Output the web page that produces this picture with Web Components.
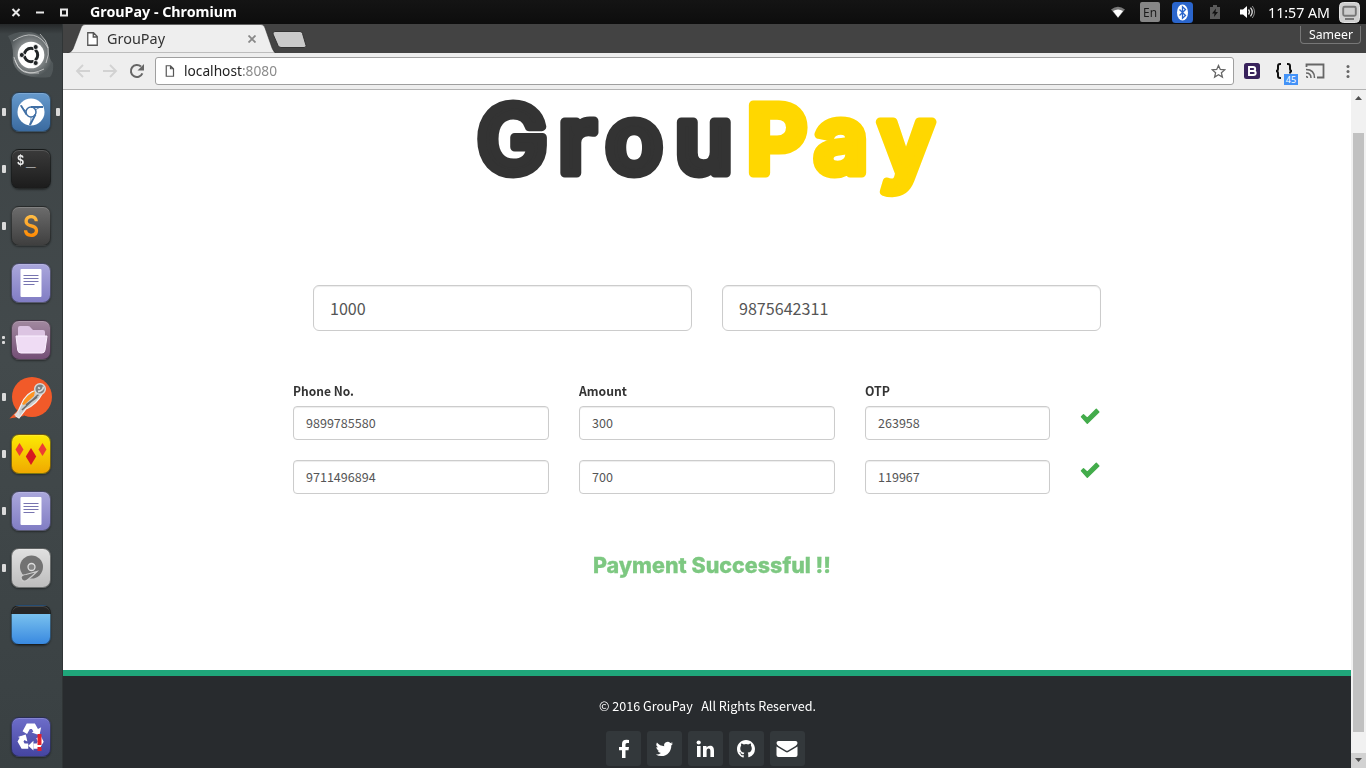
<!DOCTYPE html>
<html lang="en">
<head>
<meta charset="utf-8">
<title>GrouPay</title>
<style>
html,body{margin:0;height:100%;overflow:hidden;background:#fff;font-family:"Noto Sans","Open Sans",sans-serif}
</style>
</head>
<body>
<desktop-shell></desktop-shell>
<script>
const define=(name,html,setup)=>{
  const t=document.createElement('template');t.innerHTML=html;
  customElements.define(name,class extends HTMLElement{
    constructor(){super();this.attachShadow({mode:'open'}).append(t.content.cloneNode(true));}
    connectedCallback(){if(setup)setup(this,this.shadowRoot);}
  });
};

/* Text condensed or widened horizontally to a set width */
define('fit-text',`<style>:host{display:block;white-space:pre;line-height:1.3}span{display:inline-block;transform-origin:0 50%}</style><span><slot></slot></span>`,
(h,r)=>{const w=+h.getAttribute('w');h.style.width=w+'px';const s=r.querySelector('span');
  const n=s.getBoundingClientRect().width;if(n)s.style.transform='scaleX('+(w/n)+')';});

define('system-bar',`<style>
:host{display:flex;height:24px;align-items:center;background:linear-gradient(#141414,#0d0d0d);color:#fff;padding:0 6px 0 9px;box-sizing:border-box;position:relative}
svg{display:block;flex:none}
.title{font-weight:700;font-size:14px;margin-left:19px}
.tray{display:flex;align-items:center;margin-left:auto}
.lang{width:20px;height:20px;margin:0 12px 0 14px;border-radius:2px;background:#868686;color:#1b1b1b;display:flex;align-items:center;justify-content:center;font-size:13px}
.bt{margin-right:16px}.bat{margin-right:19px}.vol{margin-right:13px}
.clock{font-size:14.5px;margin-right:9px}
</style>
<svg width="62" height="24" stroke="#e8e8e8" stroke-width="2" fill="none"><path d="M3.500 9l7 7M10.500 9l-7 7M27 12.500h8"/><path d="M52 9.500h6v6h-6z"/></svg>
<fit-text class="title" w="147">GrouPay - Chromium</fit-text>
<div class="tray">
<svg width="16" height="16" viewBox="0 0 16 16"><path d="M1 5.500Q8 0 15 5.500L8 14z" fill="#777"/><path d="M3 7Q8 4 13 7L8 13.500z" fill="#fff"/></svg>
<div class="lang"><fit-text w="14">En</fit-text></div>
<svg class="bt" width="21" height="21" viewBox="0 0 21 21"><rect width="21" height="21" rx="3.500" fill="#2a65cc"/><ellipse cx="10.500" cy="10.500" rx="5.500" ry="8" fill="#fff"/><path d="M7.500 7.500l6 6-3 2.800V4.700l3 2.800-6 6" stroke="#2a65cc" stroke-width="1.300" fill="none"/></svg>
<svg class="bat" width="12" height="14" viewBox="0 0 12 14"><path d="M4 0h4v2h3v12H1V2h3z" fill="#5a5a5a"/><path d="M7 3.500L3 8.500h2.500L5 12l4-5H6.500z" fill="#111"/></svg>
<svg class="vol" width="15" height="14" viewBox="0 0 15 14"><path d="M0 4.500h3L7 1v12L3 9.500H0z" fill="#fff"/><path d="M8.500 4.500q2 2.500 0 5M10.500 2.700q3.500 4.300 0 8.600" stroke="#ddd" stroke-width="1.300" fill="none"/><path d="M12.300 1q4.500 6 0 12" stroke="#888" fill="none"/></svg>
<fit-text class="clock" w="62">11:57 AM</fit-text>
<svg width="21" height="21" viewBox="0 0 21 21"><rect x=".5" y=".5" width="20" height="20" rx="4" fill="#cfcfcf" stroke="#e2e2e2"/><rect x="4.200" y="4.800" width="12.600" height="9" rx="1.500" fill="#ccc" stroke="#777" stroke-width="1.900"/><path d="M6 17h9" stroke="#777" stroke-width="2"/></svg>
</div>`);

define('launcher-item',`<style>
:host{display:flex;height:57px;padding-top:8px;box-sizing:border-box;align-items:flex-start}
.m{width:11px;height:40px;display:flex;flex-direction:column;align-items:flex-start;justify-content:center;gap:2px}
.m i{display:block;width:4px;height:8px;margin-left:2px;background:#dadada;border-radius:1px}
.tile{width:40px;height:40px;border-radius:8px;background:var(--tile,#888);border:1px solid rgba(20,25,26,.55);box-sizing:border-box;box-shadow:0 1px 2px rgba(0,0,0,.4),inset 0 1px rgba(255,255,255,.16);overflow:hidden}
:host([bare]) .tile{background:none;border-color:transparent;box-shadow:none;overflow:visible}
.r{align-items:flex-end}.r i{margin:0 2px 0 0}
</style><div class="m l"></div><div class="tile"><slot></slot></div><div class="m r"></div>`,
(h,r)=>{const n=+h.getAttribute('windows')||0,l=r.querySelector('.l');
 for(let k=0;k<n;k++){const i=document.createElement('i');if(n>1){i.style.height='3px';i.style.width='3px'}l.append(i)}
 if(h.hasAttribute('active'))r.querySelector('.r').append(document.createElement('i'));});

const doc=`<svg width="38" height="38"><rect x="8.500" y="5" width="21" height="28" rx="1" fill="#fff"/><path d="M11.500 11.500h15M11.500 14.500h15M11.500 17.500h15M11.500 20.500h11" stroke="#7774b0" stroke-width="1.100"/></svg>`;
define('app-launcher',`<style>
:host{display:flex;flex-direction:column;width:63px;box-sizing:border-box;padding-top:3px;background:linear-gradient(#252829,#3d4345 10px,#434a4c 45%,#394042);border-right:1px solid #303536}
svg{display:block}
.dash{height:57px;padding:5px 0 0 8px;box-sizing:border-box}
.trash{margin-top:55px}
.sub{font:600 30px/38px "Inter",sans-serif;color:#ff9d1c;background:linear-gradient(#fb4 25%,#f80 80%);-webkit-background-clip:text;-webkit-text-fill-color:transparent;text-align:center;transform:scaleX(.85)}
.term{color:#eee;font:bold 14px/22px "Liberation Mono",monospace;padding-left:5px;white-space:nowrap;display:flex}
.term span{transform:scaleX(.85);transform-origin:0 0}
.term b{display:block;transform:translate(1px,1px) scaleX(1.15);transform-origin:0 0}
</style>
<div class="dash"><svg width="46" height="46" viewBox="0 0 46 46"><defs><radialGradient id="g"><stop offset=".5" stop-color="#c5c8c9"/><stop offset="1" stop-color="#5c6365"/></radialGradient></defs><path d="M0 4Q14-3 27 1 40 6 41 17 40 26 45 31 46 40 42 45 26 47 14 42 3 35 5 23 5 12 0 4" fill="url(#g)" opacity=".6"/><path d="M5 9Q28-6 40 16M36 37Q12 49 6 25M32 2Q45 14 38 31M7 28Q11 43 31 41" stroke="#e5e5e5" fill="none" opacity=".65"/><circle cx="23" cy="23" r="13.300" fill="#fff"/><circle cx="23" cy="23" r="6.700" stroke="#202426" stroke-width="3" fill="none"/><path d="M23 23L11 23M23 23L29 13M23 23L29 33" stroke="#fff" stroke-width="1.400"/><circle cx="23" cy="23" r="4.600" fill="#fff"/><g fill="#202426" stroke="#fff" stroke-width=".8"><circle cx="13.800" cy="23" r="2.500"/><circle cx="27.700" cy="15" r="2.500"/><circle cx="27.700" cy="31" r="2.500"/></g></svg></div>
<launcher-item windows="1" active style="--tile:linear-gradient(#6599cc,#3b6ba0)"><svg width="38" height="38" viewBox="0 0 38 38"><circle cx="19" cy="19" r="13.500" fill="#fff"/><circle cx="19" cy="19" r="5" fill="none" stroke="#3f6fa5" stroke-width="1.500"/><path d="M9 12.500l5.500 9M19 14h12M23.500 21.500L18 32" stroke="#3f6fa5" stroke-width="1.800" fill="none"/><path d="M8.500 12Q10 16 14 18M31 14q-4 0-7 2.500M17.500 32q2-4 1.500-8" stroke="#3f6fa5" stroke-width=".8" fill="none"/></svg></launcher-item>
<launcher-item windows="1" style="--tile:linear-gradient(#3a3a3a,#1c1c1c)"><div class="term"><span>$</span><b>_</b></div></launcher-item>
<launcher-item windows="1" style="--tile:linear-gradient(#6c6c6c,#3f3f3f)"><div class="sub">S</div></launcher-item>
<launcher-item style="--tile:linear-gradient(#aaa7dc,#817dc4)">${doc}</launcher-item>
<launcher-item windows="2" style="--tile:linear-gradient(#a1889f,#744f76)"><svg width="38" height="38"><path d="M6 17V7q0-2 2-2h8q2 0 3 2l2 2h10q2 0 2 2v8z" fill="#dcc4e2"/><path d="M4 15h31l-2 14q-.4 3-3 3H9q-3 0-3.300-3z" fill="#efdcf4" stroke="#fbf0ff"/></svg></launcher-item>
<launcher-item windows="1" bare><svg width="40" height="42" viewBox="0 0 40 42" style="overflow:visible"><circle cx="20" cy="19" r="20" fill="#f15a29"/><path d="M-2.500 40.500L8 30l4 8z" fill="#f15a29"/><path d="M9 27Q14 14 25 12l5 4Q25 26 14 31L7 40 4 38z" fill="#c9cccc" stroke="#f4f4f4" stroke-width="1.200"/><path d="M10 26Q14 17 23 13l-1 5-10 9z" fill="#ff9422"/><path d="M10 32L27 16M14 27l11-8" stroke="#6a6a6a" stroke-width="1.600"/><circle cx="28" cy="11" r="5.300" fill="#7d8081" stroke="#d6dadb" stroke-width="1.500"/><path d="M26 13.500q5-.5 5.500-5M26 9.500l2 1" stroke="#ddd" stroke-width="1.800" fill="none"/><path d="M2 37l5-5 1 8z" fill="#ddd"/></svg></launcher-item>
<launcher-item windows="1" style="--tile:linear-gradient(#fcea04,#f0a900)"><svg width="38" height="38"><path d="M7.500 8l4 6.500-4 6.500-4-6.500z" fill="#ed3e32"/><path d="M30.500 8l4 6.500-4 6.500-4-6.500z" fill="#ed3e32"/><path d="M19 13l5.200 8.500L19 30l-5.200-8.500z" fill="#d71920"/></svg></launcher-item>
<launcher-item windows="1" style="--tile:linear-gradient(#aaa7dc,#817dc4)">${doc}</launcher-item>
<launcher-item windows="1" style="--tile:linear-gradient(#e0e0e0,#bdbdbd)"><svg width="38" height="38"><circle cx="19.500" cy="18" r="11.500" fill="#727272"/><circle cx="19.500" cy="18" r="3.500" fill="#858585" stroke="#ddd" stroke-width="1.300"/><path d="M9 29q0-3 5-3.500l11-3q-4 4-9 8-5 4-7-1.500" fill="#727272" stroke="#ccc" stroke-width="1.200"/></svg></launcher-item>
<launcher-item style="--tile:linear-gradient(#262626 8px,#79c1ef 8px,#3989e0)"></launcher-item>
<launcher-item class="trash" style="--tile:linear-gradient(#6d6dc9,#4545a0)"><svg width="38" height="38" viewBox="0 0 38 38"><g transform="translate(2.500 2) scale(.86 .9)"><g fill="none" stroke="#fff" stroke-width="6"><path d="M12 14l4-7h6l3.500 6"/><path d="M28 19l2.500 5-3 5H22"/><path d="M16 29h-6l-3-5 3-5"/></g><g fill="#fff"><path d="M20 14l9 3 2-9z"/><path d="M22 23v11l-6-5.500z"/><path d="M4 19l9-3 2 8z"/></g></g><path d="M25.500 16h4v11h-4zM25.500 29h4v4h-4z" fill="#e4222c"/></svg></launcher-item>`);

define('tab-strip',`<style>
:host{display:flex;height:29px;background:#434343;position:relative;justify-content:space-between;align-items:flex-start}
.tabs{display:flex}
.tab{width:209px;height:29px;position:relative;display:flex;align-items:center;padding:0 20px 0 24px;box-sizing:border-box;color:#333;margin-left:4px}
.tab>*{position:relative}.tab svg.bg{position:absolute;left:0;top:0}
.t{font-size:14px;margin:1px auto 0 9px}
.new{margin:7px 0 0 -4px}
.user{font-size:12.500px;color:#fff;border:1px solid #777;border-top:0;border-radius:0 0 4px 4px;height:18px;width:61px;display:flex;justify-content:center;align-items:center;margin:2px 5px 0 0;padding-top:2px;box-sizing:border-box}
</style>
<div class="tabs"><div class="tab"><svg class="bg" width="209" height="29"><path d="M0 29Q4 29 6 25L14 4Q15 .5 18 .5H194Q197 .5 198 4l7 20q2 5 4 5z" fill="#eee" stroke="#2b2b2b" stroke-width=".5"/></svg>
<svg width="11" height="14" style="margin-left:-4px"><path d="M.75 .75h5.750l3.750 3.750v8.750H.75zM6.250 1v4h4" fill="#fff" stroke="#555" stroke-width="1.300"/></svg>
<fit-text class="t" w="58">GrouPay</fit-text>
<svg width="8" height="8" style="margin-top:1px"><path d="M.5 .5l7 7M7.500 .5l-7 7" stroke="#888" stroke-width="1.800"/></svg></div>
<svg class="new" width="35" height="17"><path d="M3 .5h25q2 0 2.500 2l3.500 12q.5 2-2 2H9q-2 0-3-2L1 3Q.5 .5 3 .5z" fill="#cacaca" stroke="#333"/></svg></div>
<div class="user"><fit-text w="44">Sameer</fit-text></div>`);

define('tool-bar',`<style>
:host{display:flex;height:37px;background:#eee;border-bottom:1px solid #b3b3b3;box-sizing:border-box;align-items:center;padding:0 12px 0 12px}
svg{display:block;flex:none}
.url{flex:1;margin:0 10px 0 10px;height:28px;border:1px solid #9f9f9f;border-radius:3px;background:#fff;box-sizing:border-box;display:flex;align-items:center;padding:0 7px 0 9px;font-size:14px;color:#222}
.url fit-text{margin:0 auto 0 9px}em{font-style:normal;color:#8b8b8b}
.json{position:relative;margin:0 12px 0 15px}
.badge{position:absolute;left:9px;top:11px;width:14px;height:11px;background:#4392f7;color:#fff;font-size:9px;line-height:11px;text-align:center}
</style>
<svg width="16" height="16"><path d="M15 8H2M8 2L2 8l6 6" fill="none" stroke="#d2d2d2" stroke-width="1.900"/></svg>
<svg width="16" height="16" style="margin-left:11px"><path d="M1 8h13M8 2l6 6-6 6" fill="none" stroke="#d2d2d2" stroke-width="1.900"/></svg>
<svg width="16" height="16" style="margin-left:11px"><path d="M13.400 10.400A6 6 0 1 1 12 3.600" fill="none" stroke="#666" stroke-width="2"/><path d="M15 1v6.500H8.500z" fill="#666"/></svg>
<div class="url"><svg width="10" height="12"><path d="M1.250 .75h4.250l3 3v7.500H1.250zM5.500 .75v3h3" fill="none" stroke="#555" stroke-width="1.200"/></svg>
<fit-text w="93">localhost<em>:8080</em></fit-text>
<svg width="15" height="15" viewBox="0 0 15 15"><path d="M7.500 1.500l1.800 4 4.400.4-3.300 2.900 1 4.300-3.900-2.300-3.900 2.300 1-4.300L1.300 5.900l4.400-.4z" fill="none" stroke="#666" stroke-width="1.300"/></svg></div>
<svg width="16" height="16"><rect width="16" height="16" rx="2.500" fill="#38225c"/><path d="M5 4h4q2.200 0 2.200 2T9 8H5zM5 8h4.300q2.400 0 2.400 2t-2.400 2H5z" fill="none" stroke="#fff" stroke-width="1.900"/></svg>
<div class="json"><svg width="18" height="16"><path d="M6 1H5Q3 1 3 3v2.500Q3 8 1 8q2 0 2 2.500V13q0 2 2 2h1M12 1h1q2 0 2 2v2.500Q15 8 17 8q-2 0-2 2.500" fill="none" stroke="#111" stroke-width="2"/></svg><div class="badge">45</div></div>
<svg width="20" height="16" viewBox="0 0 20 16"><path d="M1.500 4V1.500h17v13H12" fill="none" stroke="#666" stroke-width="1.800"/><path d="M1 13.500q1.500 0 1.500 1.500M1 10q5 0 5 5M1 6.500q8.500 0 8.500 8.500" fill="none" stroke="#666" stroke-width="1.500"/></svg>
<svg width="4" height="14" style="margin:0 4px 0 21px"><g fill="#666"><circle cx="2" cy="2.500" r="1.500"/><circle cx="2" cy="7.500" r="1.500"/><circle cx="2" cy="12.500" r="1.500"/></g></svg>`);

define('text-field',`<style>
:host{display:flex;align-items:center;box-sizing:border-box;height:34px;border:1px solid #ccc;border-radius:4px;padding:0 12px 2px;background:#fff;color:#555;font-size:12.550px;box-shadow:inset 0 1px 1px rgba(0,0,0,.075)}
:host([large]){height:46px;border-radius:6px;padding:0 16px;font-size:16.100px}
</style><slot></slot>`);

define('pay-logo',`<style>:host{display:block;height:120px}svg{display:block;margin:0 auto;overflow:visible}
text{font-family:"Inter",sans-serif;font-weight:600;font-size:94px;stroke-linejoin:round;stroke-linecap:round;stroke-width:9px}</style>
<svg width="490" height="120" viewBox="460 90 490 120"><text y="172.500" x="477 558.500 605.500 675" fill="#333" stroke="#333">Grou</text><text y="172.500" x="746.500 814 878.500" fill="#ffd700" stroke="#ffd700">Pay</text></svg>`);

define('split-row',`<style>
:host{display:grid;grid-template-columns:256px 256px 185px 21px;column-gap:30px;height:54px}
svg{display:block;margin-top:2px}
</style><slot></slot><svg width="20" height="16"><path d="M1.500 8.800L3.500 6.800 7.300 10.300 16.300 1.300 18.800 3.900 7.300 15.200z" fill="#43ac4b" stroke="#43ac4b" stroke-width="1.400" stroke-linejoin="round"/></svg>`);

define('social-link',`<style>:host{display:flex;width:35px;height:35px;background:#33383b;border-radius:3px;align-items:center;justify-content:center;padding-right:1px;box-sizing:border-box}</style><slot></slot>`);

define('site-footer',`<style>
:host{display:flex;flex-direction:column;align-items:center;height:98px;box-sizing:border-box;border-top:6px solid #1fa67a;background:#282b2e;color:#fff;font-size:12.600px;padding-top:20px;overflow:hidden}
.c{height:20px;line-height:20px}.s{display:flex;gap:6px;margin-top:15px;margin-left:-3px}
svg{display:block;fill:#fff}
</style><fit-text class="c" w="217">© 2016 GrouPay &nbsp; All Rights Reserved.</fit-text>
<div class="s">
<social-link><svg width="12" height="20" viewBox="0 0 12 20" style="margin-left:2px"><path d="M11 1v3H9Q7.500 4 7.500 5.500V8H11l-.5 3.300h-3V19H4v-7.700H1V8h3V5Q4 .8 8.500.8z"/></svg></social-link>
<social-link><svg width="20" height="18" viewBox="0 0 24 22"><path d="M23 4.300a9 9 0 0 1-2.400.7A4.200 4.200 0 0 0 22.400 2.700a9 9 0 0 1-2.700 1 4.300 4.300 0 0 0-7.400 4A12.300 12.300 0 0 1 3.400 3.200a4.300 4.300 0 0 0 1.300 5.800 4 4 0 0 1-2-.5 4.300 4.300 0 0 0 3.500 4.300 4 4 0 0 1-2 .1 4.300 4.300 0 0 0 4 3A8.800 8.800 0 0 1 2 17.700 12.300 12.300 0 0 0 8.600 19.600C16.600 19.600 21.200 13 20.900 6.600A9 9 0 0 0 23 4.300z"/></svg></social-link>
<social-link><svg width="19" height="18" viewBox="0 0 19 18"><circle cx="2.700" cy="2.500" r="2.100"/><path d="M1 6h3.600v11H1zM7 6h3.500v1.600Q11.600 5.700 14 5.700c3 0 4 2 4 5V17h-3.600v-5.800c0-1.600-.5-2.600-1.800-2.600s-2 1-2 2.600V17H7z"/></svg></social-link>
<social-link><svg width="18" height="18" viewBox="0 0 16 16"><path d="M8 0C3.580 0 0 3.580 0 8c0 3.540 2.290 6.530 5.470 7.590.4.070.55-.17.550-.38V13.500c-2.010.37-2.530-.49-2.690-.94-.09-.23-.48-.94-.82-1.130-.28-.15-.68-.52-.01-.53.63-.01 1.080.58 1.230.82.720 1.210 1.870.87 2.330.66.070-.52.280-.87.510-1.070-1.780-.2-3.640-.89-3.640-3.950 0-.87.310-1.590.82-2.150-.08-.2-.36-1.020.08-2.120 0 0 .67-.21 2.200.82a7.600 7.600 0 0 1 4 0c1.530-1.040 2.200-.82 2.200-.82.44 1.100.16 1.920.08 2.120.51.56.82 1.270.82 2.150 0 3.070-1.870 3.750-3.650 3.950.29.250.54.730.54 1.480v2.200c0 .21.150.46.550.38A8 8 0 0 0 16 8c0-4.420-3.580-8-8-8z"/></svg></social-link>
<social-link><svg width="22" height="16" viewBox="0 0 22 16"><path d="M.5 2Q.5 0 2.500 0h17q2 0 2 2 0 1.500-2 3L12 9.500q-1 .6-2 0L2.500 5Q.5 3.500.5 2zM.5 5.500l9.200 5.600q1.300.7 2.600 0l9.200-5.600V14q0 2-2 2h-17q-2 0-2-2z"/></svg></social-link>
</div>`);

define('pay-page',`<style>
:host{display:flex;flex-direction:column;flex:1;min-width:0;background:#fff;font-family:"Noto Sans CJK SC",sans-serif;color:#333}
pay-logo{margin-left:-4px}
.top{display:grid;grid-template-columns:379px 379px;gap:30px;padding:75px 0 0 250px}
.rows{padding:52px 0 0 230px;height:163px;box-sizing:border-box}
.head{display:grid;grid-template-columns:256px 256px 185px;column-gap:30px;font-weight:700;font-size:12.600px;line-height:20px;height:23px}
.ok{display:flex;justify-content:center;padding:58px 0 0 9px;margin-bottom:auto;color:#7dc881;font:800 21px "Inter",sans-serif;-webkit-text-stroke:.3px #7dc881}
</style>
<pay-logo></pay-logo>
<div class="top"><text-field large>1000</text-field><text-field large>9875642311</text-field></div>
<div class="rows"><div class="head"><fit-text w="61">Phone No.</fit-text><fit-text w="48">Amount</fit-text><fit-text w="25">OTP</fit-text></div>
<split-row><text-field>9899785580</text-field><text-field>300</text-field><text-field>263958</text-field></split-row>
<split-row><text-field>9711496894</text-field><text-field>700</text-field><text-field>119967</text-field></split-row></div>
<div class="ok"><fit-text w="238">Payment Successful !!</fit-text></div>
<site-footer></site-footer>`);

define('scroll-bar',`<style>:host{display:flex;flex-direction:column;width:15px;background:#f1f1f1;align-items:center}
svg{display:block;flex:none}.thumb{width:11px;height:599px;background:#c1c1c1;margin-top:28px;margin-bottom:auto}.dn{background:#d2d2d2}</style>
<svg width="15" height="15"><path d="M4 10l3.500-4 3.500 4z" fill="#505050"/></svg><div class="thumb"></div><svg class="dn" width="15" height="15"><path d="M4 5l3.500 4L11 5z" fill="#505050"/></svg>`);

define('desktop-shell',`<style>
:host{display:flex;flex-direction:column;width:1366px;height:768px;overflow:hidden}
.body{display:flex;flex:1;min-height:0}
.win{display:flex;flex-direction:column;flex:1;min-width:0}
.view{display:flex;flex:1;min-height:0}
</style>
<system-bar></system-bar>
<div class="body"><app-launcher></app-launcher>
<div class="win"><tab-strip></tab-strip><tool-bar></tool-bar>
<div class="view"><pay-page></pay-page><scroll-bar></scroll-bar></div></div></div>`);
</script>
</body>
</html>
